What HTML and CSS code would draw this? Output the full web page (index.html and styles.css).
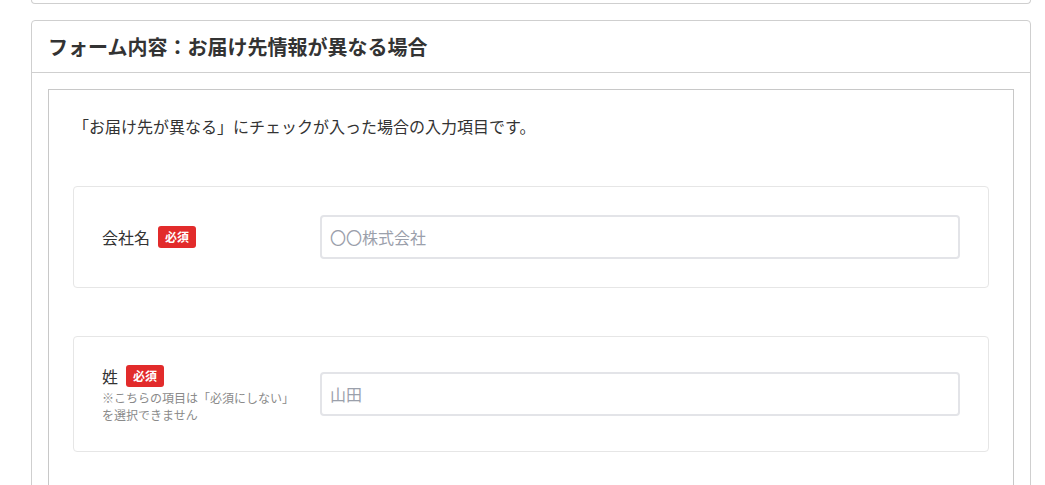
FILE: index.html
```html
<!DOCTYPE html>
<html lang="ja">
<head>
  <meta charset="UTF-8">
  <meta name="viewport" content="width=device-width, initial-scale=1.0">
  <link rel="stylesheet" href="styles.css">
</head>
<body>
  <!-- previous card (scrolled off) -->
  <div class="card card-prev"></div>

  <section class="card">
    <div class="card-header">
      <h2>フォーム内容：お届け先情報が異なる場合</h2>
    </div>
    <div class="card-body">
      <div class="form-box">
        <p class="intro">「お届け先が異なる」にチェックが入った場合の入力項目です。</p>

        <div class="field-row">
          <div class="field-label">
            <div class="label-line">
              <span class="label-text">会社名</span>
              <span class="badge">必須</span>
            </div>
          </div>
          <div class="field-input">
            <input type="text" placeholder="〇〇株式会社">
          </div>
        </div>

        <div class="field-row">
          <div class="field-label">
            <div class="label-line">
              <span class="label-text">姓</span>
              <span class="badge">必須</span>
            </div>
            <p class="note">※こちらの項目は「必須にしない」<br>を選択できません</p>
          </div>
          <div class="field-input">
            <input type="text" placeholder="山田">
          </div>
        </div>
      </div>
    </div>
  </section>
</body>
</html>
```

FILE: styles.css
```css
/* Base */
html, body {
  margin: 0;
  padding: 0;
}
body {
  background: #fff;
  color: #333;
  font-family: "Noto Sans CJK JP", "Noto Sans", sans-serif;
  font-size: 16px;
  padding: 0 14px 0 31px;
}
/* Cards */
.card {
  border: 1px solid #cfcfcf;
  border-radius: 4px;
  background: #fff;
}
.card-prev {
  height: 4px;
  border-top: none;
  border-radius: 0 0 4px 4px;
  margin-top: -1px;
  margin-bottom: 16px;
}
.card-header {
  height: 51px;
  display: flex;
  align-items: center;
  padding: 0 16px;
  border-bottom: 1px solid #cfcfcf;
}
.card-header h2 {
  margin: 0;
  font-size: 20px;
  font-weight: bold;
  color: #333;
  line-height: 1;
}
.card-body {
  padding: 16px 16px 0;
}
/* Inner form box */
.form-box {
  border: 1px solid #c8c8c8;
  border-bottom: none;
  padding: 24px 24px 40px;
}
.intro {
  margin: 0 0 48px;
  line-height: 24px;
  font-size: 16px;
}
/* Field rows */
.field-row {
  display: flex;
  align-items: center;
  border: 1px solid #e6e6e6;
  border-radius: 4px;
  padding: 28px;
  margin-bottom: 48px;
}
.field-label {
  width: 218px;
  flex-shrink: 0;
}
.label-line {
  display: flex;
  align-items: center;
  gap: 8px;
  height: 22px;
}
.label-text {
  font-size: 16px;
  line-height: 22px;
}
.badge {
  display: inline-block;
  background: #e22b2b;
  color: #fff;
  font-size: 12px;
  font-weight: bold;
  line-height: 22px;
  height: 22px;
  padding: 0 7px;
  border-radius: 3px;
}
.note {
  margin: 2px 0 0;
  font-size: 12px;
  line-height: 17px;
  color: #8a8a8a;
}
.field-input {
  flex: 1;
}
.field-input input {
  box-sizing: border-box;
  width: 100%;
  height: 44px;
  border: 2px solid #e3e4e8;
  border-radius: 4px;
  padding: 0 8px;
  font-family: inherit;
  font-size: 16px;
  color: #333;
  outline: none;
}
.field-input input::placeholder {
  color: #9ba0ab;
}
```
